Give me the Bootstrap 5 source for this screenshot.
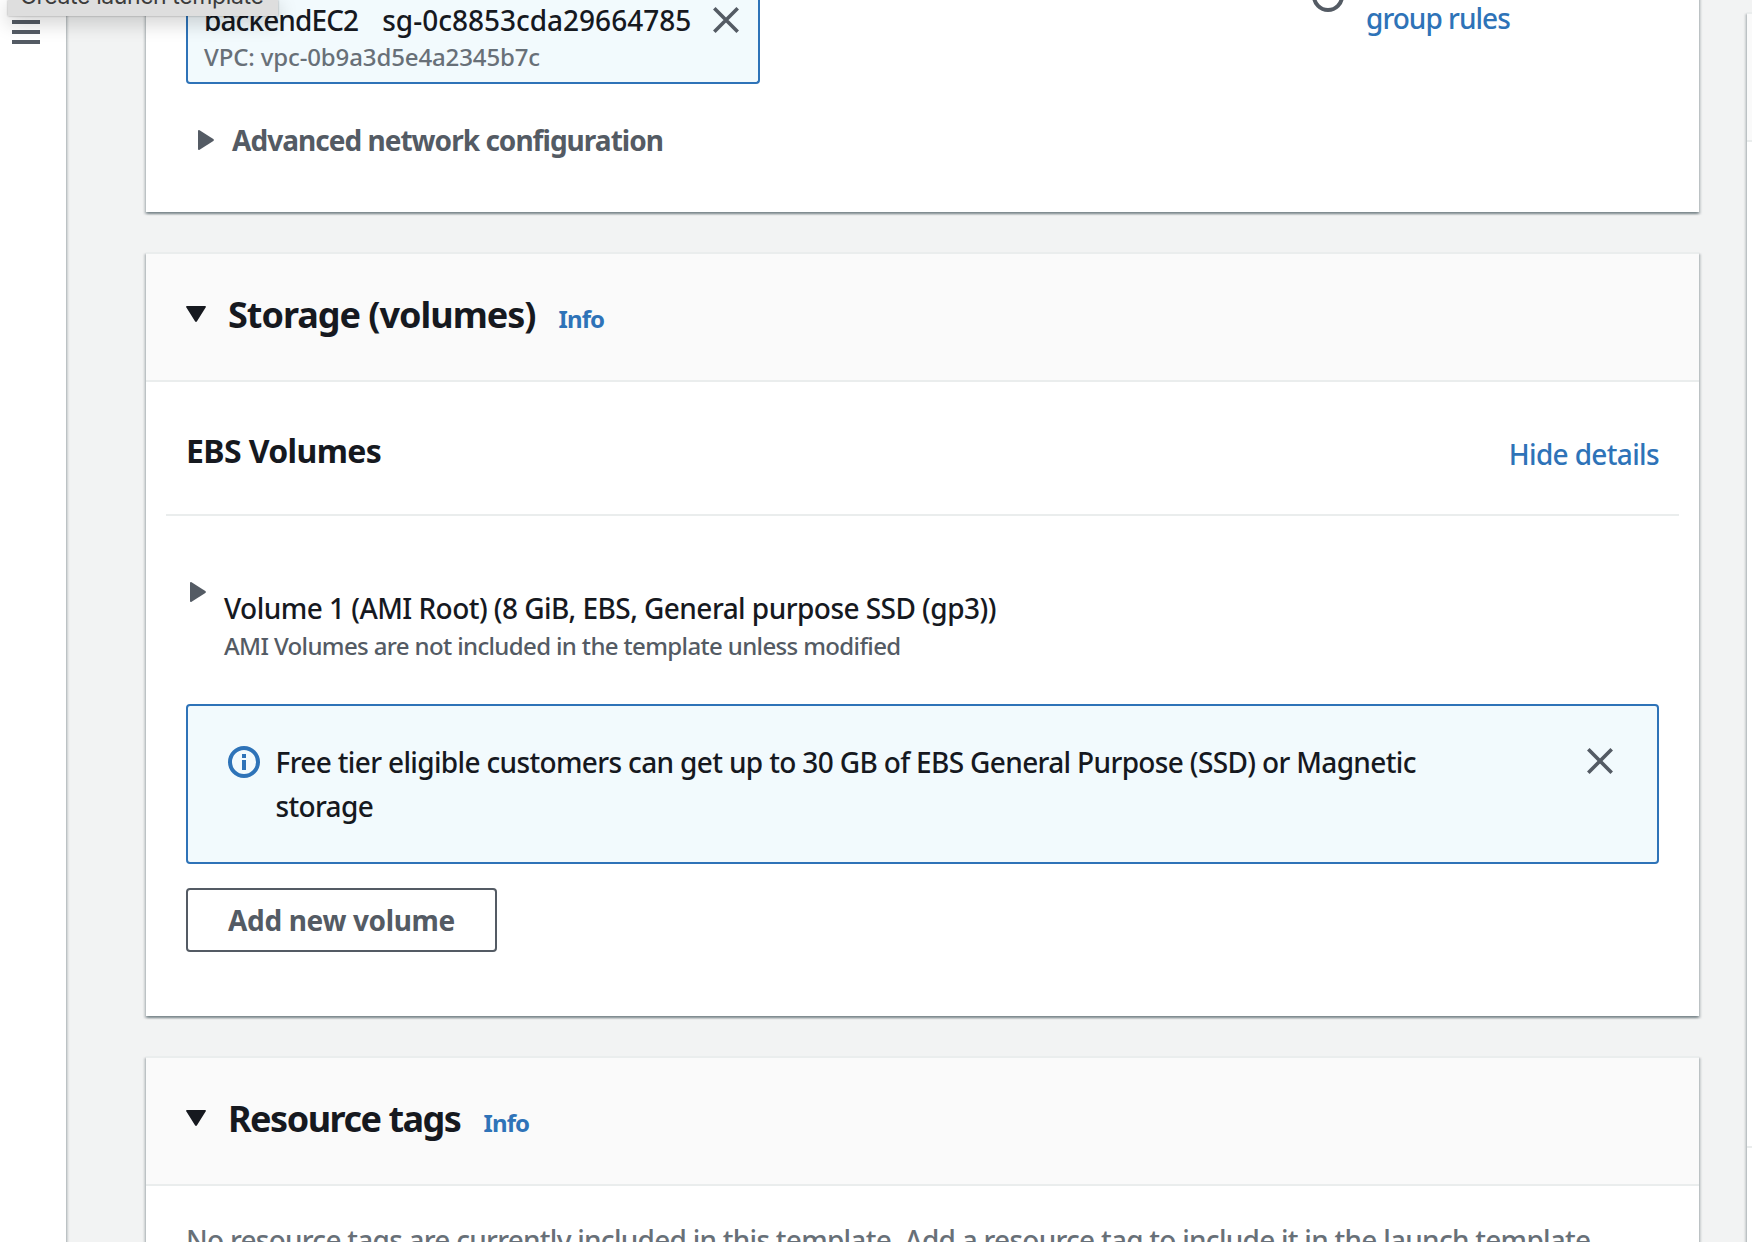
<!DOCTYPE html>
<html lang="en">
<head>
<meta charset="utf-8">
<meta name="viewport" content="width=device-width, initial-scale=1">
<title>Create launch template</title>
<link href="https://cdn.jsdelivr.net/npm/bootstrap@5.3.0/dist/css/bootstrap.min.css" rel="stylesheet">
<style>
body{font-family:"Noto Sans",sans-serif;font-size:28px;font-weight:500;line-height:36px;color:#16191f;background:#f2f3f3}
a{color:#2e73b8;text-decoration:none}
svg{display:block;flex:none}
.app-shell{height:1242px}
.side-nav{width:66px;padding:20px 0 0 12px;box-shadow:0 2px 2px rgba(0,28,36,.3),2px 2px 2px rgba(0,28,36,.15)}
.main-col{width:1553px;margin-left:80px}
.panel{background:#fff;border-top:2px solid #eaeded;box-shadow:0 2px 2px rgba(0,28,36,.3),2px 2px 2px rgba(0,28,36,.15),-2px 2px 2px rgba(0,28,36,.15)}
.panel + .panel{margin-top:40px}
.panel-network{height:220px;margin-top:-8px;padding:8px 40px 0;border-top:0}
.panel-storage{height:764px}
.panel-head{height:128px;padding:39px 40px 0;background:#fafafa;border-bottom:2px solid #eaeded}
.panel-head h2{font-size:36px;line-height:44px;font-weight:700;margin:0 0 0 22px;letter-spacing:-1.02px}
.panel-head .tags-title{letter-spacing:-1.5px}
.panel-head .caret{margin-top:13px;align-self:flex-start}
.info-link{font-size:24px;font-weight:700;margin-left:23px;letter-spacing:-.85px}
.token{width:574px;height:84px;padding:2px 19px 0 16px;border:2px solid #2e73b8;border-top:0;border-radius:0 0 4px 4px;background:#f2fafd}
.sg-name{letter-spacing:-.9px}
.sg-id{margin-left:24px}
.dismiss-sg{margin:5px 0 0 auto}
.hint{font-size:24px}
.vpc{margin-top:1px;letter-spacing:-.13px;color:#687078}
.adv-row{margin-top:38px;padding-left:12px;color:#545b64;font-weight:700;letter-spacing:-.97px}
.adv-row svg{margin:8px 18px 0 0}
.rules-col{width:347px}
.rules-col a{letter-spacing:-.98px}
.rules-col svg{margin-right:22px}
.ebs-row{height:132px;margin:0 20px;padding:49px 20px 0}
.ebs-row h3{font-size:32px;line-height:40px;font-weight:700;margin:0;letter-spacing:-.62px}
.ebs-row a{margin-top:5px;letter-spacing:-.65px}
.rule-line{height:2px;margin:0 20px;background:#eaeded}
.storage-body{padding:0 40px}
.volume-row{padding-top:66px}
.volume-text{margin:8px 0 0 18px}
.volume-name{letter-spacing:-.54px}
.volume-note{margin-top:2px;letter-spacing:-.64px;color:#545b64}
.notice{height:160px;margin-top:40px;padding:34px 44px 0 40px;border:2px solid #2e73b8;border-radius:4px;background:#f2fafd;line-height:44px}
.notice-text{width:1200px;margin-left:15.500px;letter-spacing:-.65px}
.notice .info-mark{margin-top:6px}
.notice .dismiss{margin:8px 0 0 auto}
.add-btn{width:311px;height:64px;margin-top:24px;padding:0;border:2px solid #545b64;border-radius:4px;color:#545b64;font-size:28px;line-height:36px;font-weight:700;letter-spacing:-.35px}
.tags-empty{padding:36px 40px;color:#687078;letter-spacing:-.74px;white-space:nowrap}
.summary-col{width:60px;margin:12px 0 0 48px}
.summary-head{height:128px;background:#fafafa;border-bottom:2px solid #eaeded}
.summary-body{height:1006px;border-bottom:2px solid #eaeded}
.tip{left:8px;top:0;width:270px;height:16px;background:#dedede;color:#3c3c3c;box-shadow:0 0 2px rgba(0,0,0,.35),0 6px 20px rgba(0,0,0,.22);overflow:hidden}
.tip span{display:block;margin:-18px 0 0 12px;font:23px/28px "Inter",sans-serif;letter-spacing:-.38px;white-space:nowrap}
</style>
</head>
<body>
<div class="app-shell d-flex overflow-hidden position-relative">
  <nav class="side-nav bg-white flex-shrink-0">
    <svg width="28" height="24" fill="#545b64"><path d="M0 0h28v4H0zM0 10h28v4H0zM0 20h28v4H0z"/></svg>
  </nav>

  <main class="main-col flex-shrink-0">
    <section class="panel panel-network d-flex justify-content-between">
      <div>
        <div class="token">
          <div class="d-flex">
            <span class="sg-name">backendEC2</span><span class="sg-id">sg-0c8853cda29664785</span>
            <svg class="dismiss-sg" width="26" height="26" viewBox="0 0 26 26" stroke="#545b64" stroke-width="3.6"><path d="M1.300 1.300l23.400 23.400M24.700 1.300L1.300 24.700"/></svg>
          </div>
          <div class="hint vpc">VPC: vpc-0b9a3d5e4a2345b7c</div>
        </div>
        <div class="adv-row d-flex">
          <svg width="16" height="20" viewBox="0 0 16 20" fill="#545b64"><path d="M0 1Q.2-.5 1.600.300L15.300 9q1.200 1 0 2L1.600 19.700Q.2 20.500 0 19z"/></svg>
          <span>Advanced network configuration</span>
        </div>
      </div>
      <div class="rules-col d-flex">
        <svg width="32" height="12" viewBox="0 0 32 12" fill="none" stroke="#545b64" stroke-width="4"><circle cx="16" cy="-4" r="14"/></svg>
        <a href="#">group rules</a>
      </div>
    </section>

    <section class="panel panel-storage">
      <header class="panel-head d-flex align-items-baseline">
        <svg class="caret" width="20" height="16" viewBox="0 0 20 16" fill="#16191f"><path d="M1 0h18q1.500.300.600 1.600L11 15.200q-1 1.400-2 0L.400 1.600Q-.5.300 1 0z"/></svg>
        <h2>Storage (volumes)</h2>
        <a class="info-link" href="#">Info</a>
      </header>
      <div class="ebs-row d-flex justify-content-between">
        <h3>EBS Volumes</h3>
        <a href="#">Hide details</a>
      </div>
      <div class="rule-line"></div>
      <div class="storage-body">
        <div class="volume-row d-flex">
          <svg class="ms-1" width="16" height="20" viewBox="0 0 16 20" fill="#545b64"><path d="M0 1Q.2-.5 1.600.300L15.300 9q1.200 1 0 2L1.600 19.700Q.2 20.500 0 19z"/></svg>
          <div class="volume-text">
            <div class="volume-name">Volume 1 (AMI Root) (8 GiB, EBS, General purpose SSD (gp3))</div>
            <div class="hint volume-note">AMI Volumes are not included in the template unless modified</div>
          </div>
        </div>
        <div class="notice d-flex">
          <svg class="info-mark" width="32" height="32" viewBox="0 0 32 32"><circle cx="16" cy="16" r="14" fill="none" stroke="#2e73b8" stroke-width="4"/><path fill="#2e73b8" d="M14 8h4v4h-4zM14 14h4v10h-4z"/></svg>
          <div class="notice-text">Free tier eligible customers can get up to 30 GB of EBS General Purpose (SSD) or Magnetic storage</div>
          <svg class="dismiss" width="26" height="26" viewBox="0 0 26 26" stroke="#545b64" stroke-width="3.6"><path d="M1.300 1.300l23.400 23.400M24.700 1.300L1.300 24.700"/></svg>
        </div>
        <button class="btn add-btn d-block" type="button">Add new volume</button>
      </div>
    </section>

    <section class="panel">
      <header class="panel-head d-flex align-items-baseline">
        <svg class="caret" width="20" height="16" viewBox="0 0 20 16" fill="#16191f"><path d="M1 0h18q1.500.300.600 1.600L11 15.200q-1 1.400-2 0L.400 1.600Q-.5.300 1 0z"/></svg>
        <h2 class="tags-title">Resource tags</h2>
        <a class="info-link" href="#">Info</a>
      </header>
      <div class="tags-empty">No resource tags are currently included in this template. Add a resource tag to include it in the launch template</div>
    </section>
  </main>

  <aside class="summary-col panel flex-shrink-0">
    <div class="summary-head"></div>
    <div class="summary-body"></div>
  </aside>

  <div class="tip position-absolute"><span>Create launch template</span></div>
</div>
<script src="https://cdn.jsdelivr.net/npm/bootstrap@5.3.0/dist/js/bootstrap.bundle.min.js"></script>
</body>
</html>
